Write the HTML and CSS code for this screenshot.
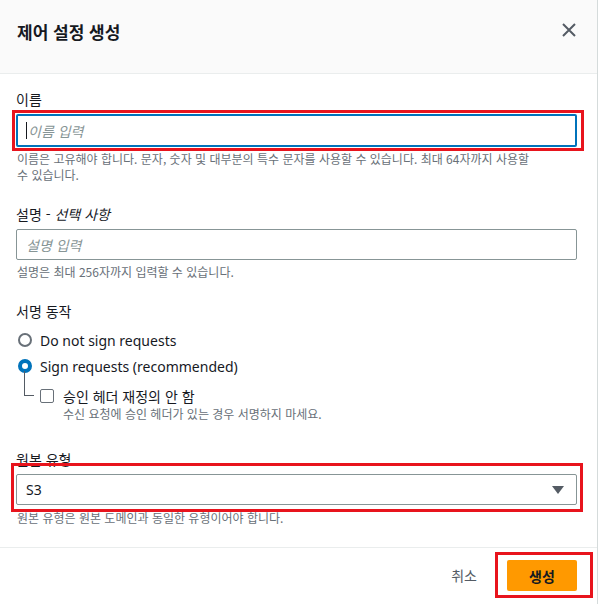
FILE: index.html
```html
<!DOCTYPE html>
<html lang="ko">
<head>
<meta charset="utf-8">
<link rel="stylesheet" href="styles.css">
</head>
<body>
<div class="modal">
  <header class="modal-header">
    <h2 class="title">제어 설정 생성</h2>
    <button class="close" aria-label="닫기">
      <svg width="16" height="16" viewBox="0 0 16 16"><path d="M2 2 L14 14 M14 2 L2 14" stroke="#545b64" stroke-width="2" fill="none"/></svg>
    </button>
  </header>
  <main class="modal-body">
    <div class="field">
      <label class="label">이름</label>
      <div class="highlight hl-name">
        <div class="input focused"><span class="caret"></span><span class="placeholder">이름 입력</span></div>
      </div>
      <p class="help help-name">이름은 고유해야 합니다. 문자, 숫자 및 대부분의 특수 문자를 사용할 수 있습니다. 최대 64자까지 사용할 수 있습니다.</p>
    </div>
    <div class="field">
      <label class="label">설명 - <i>선택 사항</i></label>
      <div class="input"><span class="placeholder">설명 입력</span></div>
      <p class="help">설명은 최대 256자까지 입력할 수 있습니다.</p>
    </div>
    <div class="field">
      <label class="label">서명 동작</label>
      <div class="radio-row"><span class="radio"></span><span>Do not sign requests</span></div>
      <div class="radio-row"><span class="radio checked"></span><span>Sign requests (recommended)</span></div>
      <div class="sub">
        <span class="connector"></span>
        <div class="check-wrap">
          <div class="check-row"><span class="checkbox"></span><span>승인 헤더 재정의 안 함</span></div>
          <p class="help sub-help">수신 요청에 승인 헤더가 있는 경우 서명하지 마세요.</p>
        </div>
      </div>
    </div>
    <div class="field field-origin">
      <label class="label">원본 유형</label>
      <div class="highlight hl-select">
        <div class="input select"><span>S3</span><svg width="12" height="10" viewBox="0 0 12 10"><path d="M0 1 H12 L6 9 Z" fill="#545b64"/></svg></div>
      </div>
      <p class="help">원본 유형은 원본 도메인과 동일한 유형이어야 합니다.</p>
    </div>
  </main>
  <footer class="modal-footer">
    <button class="link-btn">취소</button>
    <div class="highlight hl-btn"><button class="primary">생성</button></div>
  </footer>
</div>
</body>
</html>
```
FILE: styles.css
```css
* { box-sizing: border-box; }
html, body { margin: 0; padding: 0; background: #fff; }
body {
  font-family: "Noto Sans", "Noto Sans CJK KR", sans-serif;
  font-size: 14px;
  color: #16191f;
  width: 601px;
  height: 604px;
  overflow: hidden;
}
.modal {
  width: 598px;
  height: 604px;
  border-right: 1px solid #d5dbdb;
  display: flex;
  flex-direction: column;
}
.modal-header {
  height: 74px;
  flex: none;
  background: #fafafa;
  border-bottom: 1px solid #eaeded;
  display: flex;
  align-items: flex-start;
  justify-content: space-between;
  padding: 20px 20px 0 17px;
}
.title {
  margin: 0;
  font-size: 17px;
  font-weight: 700;
  line-height: 24px;
  font-family: "Noto Sans CJK KR", sans-serif;
}
.close {
  border: 0;
  background: none;
  padding: 0;
  margin-top: 2px;
  width: 16px;
  height: 16px;
  display: flex;
}
.modal-body {
  flex: 1;
  min-height: 0;
  padding: 15px 20px 0 16px;
  display: flex;
  flex-direction: column;
}
.field { display: flex; flex-direction: column; margin-bottom: 21px; }
.label {
  font-size: 14px;
  line-height: 20px;
  margin-bottom: 5px;
  font-family: "Noto Sans CJK KR", sans-serif;
}
.label i { font-style: italic; }
.highlight { position: relative; }
.highlight::after {
  content: "";
  position: absolute;
  border: 3px solid #e8141d;
  pointer-events: none;
}
.hl-name::after { top: -4px; left: -4px; right: -7px; bottom: -4px; }
.hl-select::after { top: -11px; left: -5px; right: -6px; bottom: -7px; }
.hl-btn::after { top: -8px; left: -12px; right: -16px; bottom: -7px; }
.input {
  height: 31px;
  border: 1px solid #879596;
  border-radius: 2px;
  display: flex;
  align-items: center;
  padding: 0 9px;
  font-size: 14px;
}
.input.focused { border: 2px solid #0073bb; height: 33px; padding-left: 8px; }
.caret { width: 1px; height: 17px; background: #16191f; margin-right: 1px; }
.placeholder { color: #879596; font-style: italic; font-family: "Noto Sans CJK KR", sans-serif; }
.help {
  margin: 4px 0 0 1px;
  font-size: 12px;
  line-height: 16px;
  color: #687078;
  font-family: "Noto Sans CJK KR", sans-serif;
}
.help-name { padding-right: 34px; }
.radio-row {
  display: flex;
  align-items: center;
  gap: 8px;
  height: 20px;
  margin-top: 6px;
}
.label + .radio-row { margin-top: 4px; }
.radio {
  width: 14px;
  height: 14px;
  border: 2px solid #687078;
  border-radius: 50%;
  margin-left: 2px;
}
.radio.checked { border: 4px solid #0073bb; }
.sub { display: flex; margin-top: 0; }
.connector {
  width: 10px;
  height: 25px;
  border-left: 1px solid #545b64;
  border-bottom: 1px solid #545b64;
  margin-left: 8px;
  margin-top: -5px;
  margin-right: 6px;
  flex: none;
}
.check-wrap { display: flex; flex-direction: column; padding-top: 10px; }
.check-row { display: flex; align-items: center; gap: 9px; height: 20px; font-family: "Noto Sans CJK KR", sans-serif; }
.checkbox {
  width: 14px; height: 14px;
  border: 1.5px solid #687078;
  border-radius: 2px;
}
.sub-help { margin: 0 0 0 23px; }
.field-origin { margin-top: 6px; margin-bottom: 0; }
.field-origin .label { margin-bottom: 5px; }
.field-origin .help { margin-top: 5px; }
.select { justify-content: space-between; padding-right: 12px; font-size: 14px; }
.modal-footer {
  height: 57px;
  flex: none;
  border-top: 1px solid #eaeded;
  display: flex;
  align-items: flex-start;
  justify-content: flex-end;
  padding: 12px 20px 0 0;
  gap: 30px;
}
.link-btn {
  border: 0; background: none; padding: 0;
  font-family: "Noto Sans CJK KR", sans-serif;
  font-size: 14px; color: #545b64;
  margin-top: 5px;
  height: 20px;
}
.primary {
  display: block;
  width: 70px; height: 31px;
  background: #ff9900;
  border: 0; border-radius: 2px;
  font-family: "Noto Sans CJK KR", sans-serif;
  font-size: 14px; font-weight: 700;
  color: #16191f;
  margin: 0;
}
```
